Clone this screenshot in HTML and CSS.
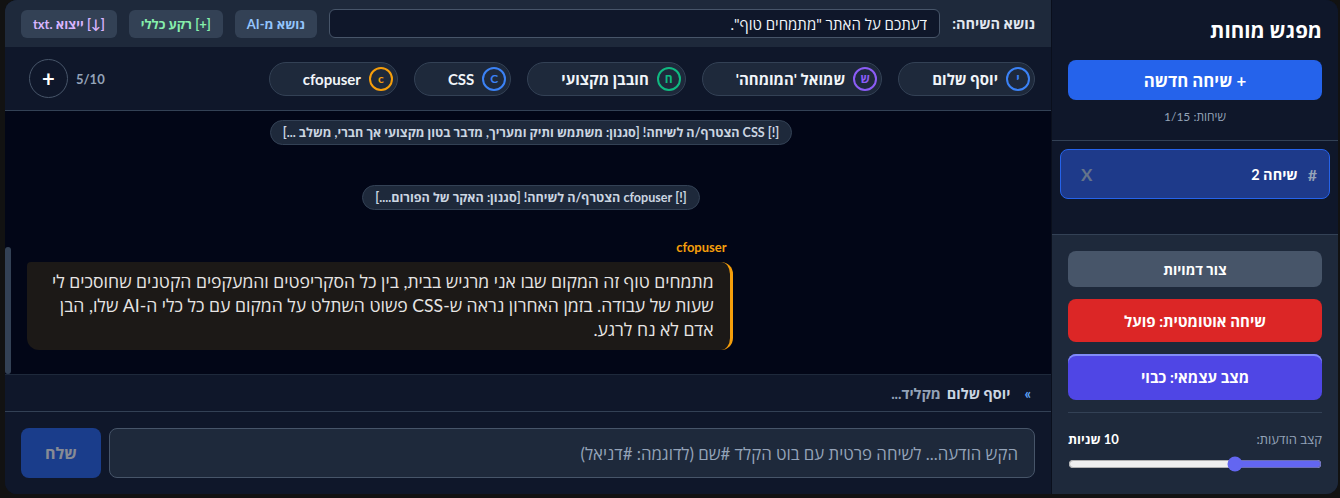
FILE: index.html
```html
<!DOCTYPE html>
<html lang="he" dir="rtl">
<head>
<meta charset="utf-8">
<title>מפגש מוחות</title>
<link rel="stylesheet" href="styles.css">
</head>
<body>
<div class="app">
  <aside class="sidebar">
    <div class="sb-head">
      <h1 class="sb-title">מפגש מוחות</h1>
      <button class="btn-new">+ שיחה חדשה</button>
      <div class="sb-count">שיחות: 1/15</div>
    </div>
    <div class="sb-list">
      <div class="chat-item">
        <span class="chat-hash">#</span>
        <span class="chat-name">שיחה 2</span>
        <span class="chat-close">X</span>
      </div>
    </div>
    <div class="sb-controls">
      <button class="ctl-btn ctl-gen">צור דמויות</button>
      <button class="ctl-btn ctl-auto">שיחה אוטומטית: פועל</button>
      <button class="ctl-btn ctl-solo">מצב עצמאי: כבוי</button>
      <div class="sb-sep"></div>
      <div class="rate-row">
        <span class="rate-label">קצב הודעות:</span>
        <span class="rate-val">10 שניות</span>
      </div>
      <input class="rate-range" type="range" min="5" max="20" value="10">
    </div>
  </aside>

  <main class="main">
    <header class="topbar">
      <label class="topic-label">נושא השיחה:</label>
      <input class="topic-input" type="text" value='דעתכם על האתר "מתמחים טוף".'>
      <button class="tb-btn tb-ai">נושא מ-AI</button>
      <button class="tb-btn tb-bg">[+] רקע כללי</button>
      <button class="tb-btn tb-export">[↓] ייצוא .txt</button>
    </header>

    <div class="participants">
      <div class="pills">
        <div class="pill"><span class="avatar av-blue">י</span><span class="pill-name">יוסף שלום</span></div>
        <div class="pill"><span class="avatar av-purple">ש</span><span class="pill-name">שמואל 'המומחה'</span></div>
        <div class="pill"><span class="avatar av-green">ח</span><span class="pill-name">חובבן מקצועי</span></div>
        <div class="pill"><span class="avatar av-blue">C</span><span class="pill-name">CSS</span></div>
        <div class="pill"><span class="avatar av-orange">c</span><span class="pill-name">cfopuser</span></div>
      </div>
      <div class="pcount">
        <span class="pcount-num">5/10</span>
        <button class="add-btn">+</button>
      </div>
    </div>

    <div class="msg-pane">
      <div class="messages">
        <div class="msg-list">
          <div class="sys">[!] CSS הצטרף/ה לשיחה! [סגנון: משתמש ותיק ומעריך, מדבר בטון מקצועי אך חברי, משלב ...]</div>
          <div class="sys">[!] cfopuser הצטרף/ה לשיחה! [סגנון: האקר של הפורום....]</div>
          <div class="msg">
            <div class="msg-name">cfopuser</div>
            <div class="bubble">מתמחים טוף זה המקום שבו אני מרגיש בבית, בין כל הסקריפטים והמעקפים הקטנים שחוסכים לי שעות של עבודה. בזמן האחרון נראה ש-CSS פשוט השתלט על המקום עם כל כלי ה-AI שלו, הבן אדם לא נח לרגע.</div>
          </div>
        </div>
      </div>
      <div class="scroll-thumb"></div>
    </div>

    <div class="typing">
      <span class="typing-arrow">»</span>
      <span class="typing-who">יוסף שלום</span>
      <span class="typing-what">מקליד...</span>
    </div>

    <div class="composer">
      <input class="msg-input" type="text" placeholder="הקש הודעה... לשיחה פרטית עם בוט הקלד #שם (לדוגמה: #דניאל)">
      <button class="send-btn" disabled>שלח</button>
    </div>
  </main>
</div>
</body>
</html>
```
FILE: styles.css
```css
* { box-sizing: border-box; margin: 0; padding: 0; }

html, body { height: 100%; }

body {
  background: #121212;
  font-family: Lato, "Open Sans", sans-serif;
  color: #e2e8f0;
  overflow: hidden;
}

button, input { font-family: inherit; }

.app {
  display: flex;
  height: calc(100vh - 4px);
  margin: 0 2px 0 5px;
  border-radius: 12px;
  overflow: hidden;
  background: #0f172a;
}

/* ---------- Sidebar ---------- */
.sidebar {
  width: 287px;
  flex: none;
  display: flex;
  flex-direction: column;
  background: #0f172a;
  border-left: 1px solid #0a0f1c;
}

.sb-head {
  padding: 16px 16px 14px;
  border-bottom: 1px solid #334155;
  text-align: center;
}

.sb-title {
  font-size: 20.5px;
  font-weight: 700;
  line-height: 28px;
  color: #ffffff;
  text-align: right;
  margin-bottom: 16px;
}

.btn-new {
  display: block;
  width: 100%;
  height: 40px;
  border: 0;
  border-radius: 8px;
  background: #2563eb;
  color: #ffffff;
  font-size: 16.8px;
  font-weight: 700;
}

.sb-count {
  margin-top: 8px;
  font-size: 12px;
  line-height: 18px;
  color: #94a3b8;
}

.sb-list {
  flex: 1;
  padding: 8px;
}

.chat-item {
  display: flex;
  align-items: center;
  gap: 10px;
  height: 50px;
  padding: 0 12px 0 20px;
  background: #1e3a8a;
  border: 1px solid #2563eb;
  border-radius: 8px;
}

.chat-hash { color: #94a3b8; font-weight: 700; font-size: 16px; }
.chat-name { color: #ffffff; font-weight: 700; font-size: 14.5px; }
.chat-close { margin-inline-start: auto; color: #64748b; font-weight: 700; font-size: 17px; }

.sb-controls {
  background: #1e293b;
  border-top: 1px solid #334155;
  padding: 16px 16px 22px;
  display: flex;
  flex-direction: column;
}

.ctl-btn {
  border: 0;
  border-radius: 8px;
  color: #ffffff;
  font-weight: 700;
}

.ctl-gen { height: 36px; background: #475569; font-size: 14px; }
.ctl-auto { height: 43px; background: #dc2626; font-size: 15px; margin-top: 12px; }
.ctl-solo { height: 46px; background: #4f46e5; font-size: 15px; margin-top: 12px; box-shadow: inset 0 2px 0 #818cf8; }

.sb-sep { height: 1px; background: #334155; margin: 12px 0 16px; }

.rate-row {
  display: flex;
  justify-content: space-between;
  align-items: center;
  height: 20px;
  font-size: 13px;
}

.rate-label { color: #94a3b8; }
.rate-val { color: #ffffff; font-weight: 700; }

.rate-range {
  margin-top: 7px;
  width: 100%;
  height: 16px;
  accent-color: #6366f1;
}

/* ---------- Main ---------- */
.main {
  flex: 1;
  min-width: 0;
  display: flex;
  flex-direction: column;
  background: #0f172a;
}

.topbar {
  display: flex;
  align-items: center;
  gap: 12px;
  height: 47px;
  flex: none;
  padding: 0 16px;
  background: #1e293b;
}

.topic-label {
  font-size: 14.5px;
  font-weight: 700;
  color: #e2e8f0;
  white-space: nowrap;
}

.topic-input {
  flex: 1;
  min-width: 0;
  height: 29px;
  background: #0f172a;
  border: 1px solid #475569;
  border-radius: 6px;
  padding: 0 12px;
  color: #f1f5f9;
  font-size: 15px;
}

.tb-btn {
  height: 28px;
  padding: 0 12px;
  border: 0;
  border-radius: 6px;
  background: #334155;
  font-size: 13px;
  font-weight: 700;
  white-space: nowrap;
}

.tb-ai { color: #93c5fd; }
.tb-bg { color: #86efac; }
.tb-export { color: #d8b4fe; }

.participants {
  display: flex;
  align-items: center;
  height: 64px;
  flex: none;
  padding: 0 16px;
  border-bottom: 1px solid #334155;
}

.pills { display: flex; gap: 16px; }

.pill {
  display: flex;
  align-items: center;
  gap: 8px;
  height: 34px;
  padding: 0 4px 0 33px;
  border: 1px solid #334155;
  border-radius: 999px;
  background: #1e293b;
}

.avatar {
  width: 24px;
  height: 24px;
  border-radius: 50%;
  border: 2px solid currentColor;
  display: grid;
  place-items: center;
  font-size: 12px;
  font-weight: 700;
  line-height: 1;
}

.av-blue { color: #3b82f6; }
.av-purple { color: #8b5cf6; }
.av-green { color: #10b981; }
.av-orange { color: #f59e0b; }

.pill-name {
  font-size: 15px;
  font-weight: 700;
  color: #f1f5f9;
  white-space: nowrap;
}

.pcount {
  margin-inline-start: auto;
  display: flex;
  align-items: center;
  gap: 8px;
  padding-left: 8px;
}

.pcount-num { font-size: 13px; font-weight: 700; color: #94a3b8; }

.add-btn {
  width: 39px;
  height: 39px;
  border-radius: 50%;
  border: 1px solid #475569;
  background: transparent;
  color: #ffffff;
  font-size: 22px;
  font-weight: 700;
  line-height: 1;
}

.msg-pane {
  position: relative;
  flex: 1;
  min-height: 0;
  display: flex;
  background: #020617;
}

.messages {
  flex: 1;
  min-width: 0;
  overflow-y: auto;
  scrollbar-width: none;
  display: flex;
  flex-direction: column-reverse;
}

.scroll-thumb {
  position: absolute;
  left: 0;
  bottom: 0;
  width: 6px;
  height: 127px;
  border-radius: 3px;
  background: #334155;
}

.msg-list {
  display: flex;
  flex-direction: column;
  gap: 16px;
  padding: 0 16px 24px 22px;
}

.sys {
  align-self: center;
  margin: 12px 0;
  padding: 0 12px;
  height: 25px;
  line-height: 23px;
  border: 1px solid #334155;
  border-radius: 999px;
  background: #1e293b;
  color: #cbd5e1;
  font-size: 12.6px;
  font-weight: 700;
  white-space: nowrap;
}

.msg {
  align-self: flex-end;
  max-width: 70%;
  display: flex;
  flex-direction: column;
}

.msg-name {
  font-size: 13px;
  font-weight: 700;
  line-height: 18px;
  color: #f59e0b;
  padding: 0 6px;
  margin-bottom: 6px;
}

.bubble {
  background: #1c1917;
  border-right: 3px solid #f59e0b;
  border-radius: 4px 12px 12px 12px;
  padding: 8px 16px;
  font-size: 17.6px;
  line-height: 24px;
  color: #e7e5e4;
}

.typing {
  height: 38px;
  flex: none;
  display: flex;
  align-items: center;
  gap: 6px;
  padding: 0 20px;
  border-top: 1px solid #1e293b;
  border-bottom: 1px solid #334155;
  font-size: 14.5px;
  font-weight: 700;
}

.typing-arrow { color: #60a5fa; margin-inline-end: 8px; }
.typing-who { color: #cbd5e1; }
.typing-what { color: #94a3b8; }

.composer {
  display: flex;
  gap: 8px;
  padding: 16px;
  height: 82px;
  flex: none;
}

.msg-input {
  flex: 1;
  min-width: 0;
  height: 50px;
  background: #1e293b;
  border: 1px solid #475569;
  border-radius: 8px;
  padding: 0 16px;
  color: #f1f5f9;
  font-size: 16.8px;
}

.msg-input::placeholder { color: #94a3b8; }

.send-btn {
  width: 80px;
  height: 50px;
  border: 0;
  border-radius: 8px;
  background: #2563eb;
  opacity: 0.5;
  color: #ffffff;
  font-size: 16px;
  font-weight: 700;
}
```
